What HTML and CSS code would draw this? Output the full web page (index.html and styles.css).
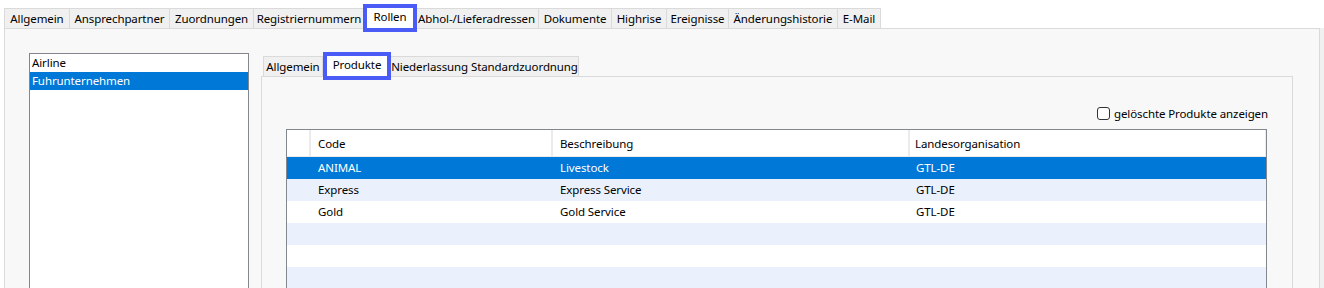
FILE: index.html
```html
<!DOCTYPE html>
<html lang="de">
<head>
<meta charset="utf-8">
<title>Rollen</title>
<link rel="stylesheet" href="styles.css">
</head>
<body>
<div class="window">
  <div class="tabstrip outer-tabs">
    <div class="tab w66">Allgemein</div>
    <div class="tab w100">Ansprechpartner</div>
    <div class="tab w84">Zuordnungen</div>
    <div class="tab w111">Registriernummern</div>
    <div class="tab selected w46">Rollen</div>
    <div class="tab w124">Abhol-/Lieferadressen</div>
    <div class="tab w73">Dokumente</div>
    <div class="tab w55">Highrise</div>
    <div class="tab w62">Ereignisse</div>
    <div class="tab w109">Änderungshistorie</div>
    <div class="tab w43">E-Mail</div>
  </div>
  <div class="pane-row">
    <div class="pane">
      <div class="listbox">
        <div class="list-item">Airline</div>
        <div class="list-item active">Fuhrunternehmen</div>
      </div>
      <div class="detail">
        <div class="tabstrip inner-tabs">
          <div class="tab w60">Allgemein</div>
          <div class="tab selected inner-sel w60">Produkte</div>
          <div class="tab w188">Niederlassung Standardzuordnung</div>
        </div>
        <div class="inner-pane">
          <div class="options">
            <label class="check"><span class="box"></span><span>gelöschte Produkte anzeigen</span></label>
          </div>
          <div class="grid">
            <div class="grow head">
              <div class="c0"></div>
              <div class="c1">Code</div>
              <div class="c2">Beschreibung</div>
              <div class="c3">Landesorganisation</div>
            </div>
            <div class="grow sel">
              <div class="c0"></div>
              <div class="c1">ANIMAL</div>
              <div class="c2">Livestock</div>
              <div class="c3">GTL-DE</div>
            </div>
            <div class="grow alt">
              <div class="c0"></div>
              <div class="c1">Express</div>
              <div class="c2">Express Service</div>
              <div class="c3">GTL-DE</div>
            </div>
            <div class="grow">
              <div class="c0"></div>
              <div class="c1">Gold</div>
              <div class="c2">Gold Service</div>
              <div class="c3">GTL-DE</div>
            </div>
            <div class="grow alt"></div>
            <div class="grow"></div>
            <div class="grow alt"></div>
          </div>
        </div>
      </div>
    </div>
  </div>
</div>
</body>
</html>
```

FILE: styles.css
```css
* { box-sizing: border-box; }
html, body {
  margin: 0;
  padding: 0;
  background: #ffffff;
  height: 288px;
  overflow: hidden;
}
body {
  font-family: "Noto Sans", "Open Sans", sans-serif;
  font-size: 11.5px;
  color: #000;
}
.window {
  padding-top: 8px;
}
.tabstrip {
  display: flex;
  align-items: flex-end;
  height: 20px;
}
.outer-tabs {
  margin-left: 4px;
}
.tab {
  flex: none;
  height: 20px;
  line-height: 20px;
  background: #f0f0f0;
  border: 1px solid #dadada;
  border-bottom: none;
  border-left: none;
  text-align: center;
  white-space: nowrap;
  letter-spacing: -0.1px;
}
.tab:first-child { border-left: 1px solid #dadada; }
.tab.selected {
  background: #ffffff;
  margin: 0 2px;
  border: none;
  outline: 4px solid #4a5bf6;
  line-height: 18px;
  position: relative;
  z-index: 2;
}
.tab.inner-sel {
  margin: 0 4px;
}
.w43 { width: 43px; } .w46 { width: 46px; } .w55 { width: 55px; }
.w59 { width: 59px; } .w60 { width: 60px; } .w62 { width: 62px; }
.w66 { width: 66px; } .w73 { width: 73px; } .w84 { width: 84px; }
.w100 { width: 100px; } .w109 { width: 109px; } .w111 { width: 111px; }
.w124 { width: 124px; } .w188 { width: 188px; }

.pane-row {
  padding: 0 4px 0 4px;
  background: linear-gradient(to left, #f0f0f0 4px, #ffffff 4px);
}
.pane {
  display: flex;
  align-items: flex-start;
  gap: 12px;
  height: 260px;
  overflow: hidden;
  background: #f8f8f8;
  border: 1px solid #dadada;
  border-bottom: none;
  padding: 24px 26px 0 24px;
}
.listbox {
  flex: none;
  width: 220px;
  height: 236px;
  background: #fff;
  border: 1px solid #828790;
  border-bottom: none;
}
.list-item {
  height: 18px;
  line-height: 18px;
  padding-left: 2px;
  letter-spacing: -0.1px;
}
.list-item.active {
  background: #0078d7;
  color: #fff;
}
.detail {
  flex: 1;
  display: flex;
  flex-direction: column;
  padding-top: 3px;
}
.inner-tabs {
  margin-left: 2px;
}
.inner-pane {
  height: 212px;
  overflow: hidden;
  background: #f8f8f8;
  border: 1px solid #dadada;
  border-bottom: none;
  padding: 0 25px 0 24px;
}
.options {
  display: flex;
  justify-content: flex-end;
  height: 52px;
  padding-top: 28px;
}
.check {
  display: flex;
  align-items: center;
  gap: 4px;
  height: 16px;
  letter-spacing: -0.1px;
  margin-right: -1px;
}
.box {
  width: 13px;
  height: 13px;
  border: 1px solid #333;
  border-radius: 3px;
  background: #fff;
}
.grid {
  background: #fff;
  border: 1px solid #828790;
  border-bottom: none;
  height: 159px;
  overflow: hidden;
}
.grow {
  display: grid;
  grid-template-columns: 24px 242px 357px 1fr;
  height: 22px;
  line-height: 22px;
  letter-spacing: -0.1px;
}
.grow.head {
  height: 27px;
  line-height: 27px;
  border-bottom: 1px solid #ececec;
}
.grow.head > div {
  border-right: 2px solid #ebebeb;
}
.grow > div {
  padding-left: 7px;
  white-space: nowrap;
  overflow: hidden;
}
.grow.head > .c3 { margin-right: -1px; padding-left: 5px; }
.grow > .c3 { padding-left: 6px; }
.grow.sel { background: #0078d7; color: #fff; }
.grow.alt { background: #eaf1fc; }
```
